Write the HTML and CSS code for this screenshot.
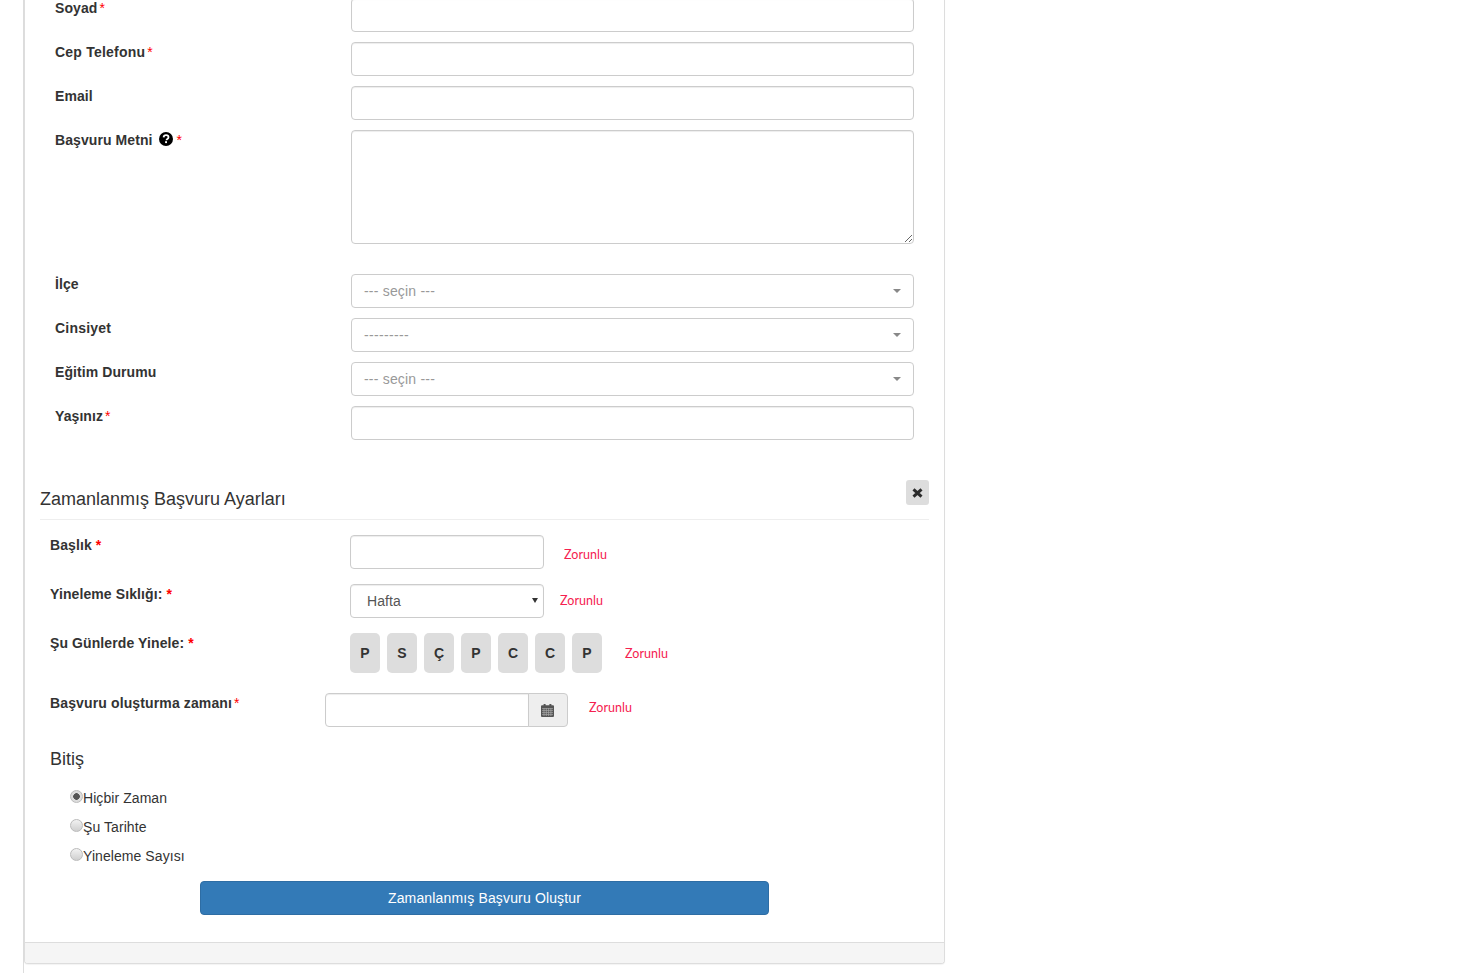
FILE: index.html
```html
<!DOCTYPE html>
<html lang="tr">
<head>
<meta charset="utf-8">
<title>Zamanlanmış Başvuru</title>
<link rel="stylesheet" href="styles.css">
</head>
<body>
<div class="page">
  <div class="panel">
    <div class="panel-body">
      <form class="main-form">
        <div class="row"><label class="lbl">Soyad<span class="req">*</span></label><input class="ctl" type="text"></div>
        <div class="row"><label class="lbl lbl-wide">Cep Telefonu<span class="req">*</span></label><input class="ctl" type="text"></div>
        <div class="row"><label class="lbl">Email</label><input class="ctl" type="text"></div>
        <div class="row row-area">
          <label class="lbl">Başvuru Metni
            <svg class="help" viewBox="0 0 14 14" width="14" height="14"><circle cx="7" cy="7" r="7" fill="#000"/><path d="M4.6 5.4C4.7 4 5.7 3.2 7.1 3.2c1.4 0 2.4.8 2.4 2 0 1-.6 1.4-1.2 1.8-.6.4-.8.6-.8 1.3" fill="none" stroke="#fff" stroke-width="1.8"/><rect x="6.1" y="9.2" width="1.9" height="1.9" fill="#fff"/></svg><span class="req req-help">*</span></label>
          <textarea class="ctl area"></textarea>
        </div>
        <div class="row"><label class="lbl">İlçe</label><div class="ctl pick"><span>--- seçin ---</span><i class="caret"></i></div></div>
        <div class="row"><label class="lbl lbl-wide">Cinsiyet</label><div class="ctl pick"><span class="dashes">---------</span><i class="caret"></i></div></div>
        <div class="row"><label class="lbl">Eğitim Durumu</label><div class="ctl pick"><span>--- seçin ---</span><i class="caret"></i></div></div>
        <div class="row"><label class="lbl">Yaşınız<span class="req">*</span></label><input class="ctl" type="text"></div>
      </form>

      <div class="sec-head">
        <h4 class="sec-title">Zamanlanmış Başvuru Ayarları</h4>
        <button class="close" type="button" aria-label="Kapat"><svg viewBox="0 0 11 10" width="11" height="10"><path d="M1.5 1.3l8 7.4M9.5 1.3l-8 7.4" stroke="#2b2b2b" stroke-width="3"/></svg></button>
      </div>

      <div class="sched">
        <div class="srow s1"><label class="slbl">Başlık <b>*</b></label><input class="ctl short" type="text"><span class="err e1">Zorunlu</span></div>
        <div class="srow s1"><label class="slbl">Yineleme Sıklığı: <b>*</b></label><select class="ctl short sel"><option>Hafta</option></select><span class="err e2">Zorunlu</span></div>
        <div class="srow s2"><label class="slbl">Şu Günlerde Yinele: <b>*</b></label>
          <div class="days"><span class="day">P</span><span class="day">S</span><span class="day">Ç</span><span class="day">P</span><span class="day">C</span><span class="day">C</span><span class="day">P</span></div>
          <span class="err e3">Zorunlu</span></div>
        <div class="srow s3"><label class="slbl time-lbl">Başvuru oluşturma zamanı<span class="req">*</span></label>
          <div class="group"><input class="ctl grp-in" type="text"><span class="addon"><svg class="cal" viewBox="0 0 13 14" width="13" height="14"><path d="M0 3.2a1 1 0 0 1 1-1h1.6V1h2v1.2h3.8V1h2v1.2H12a1 1 0 0 1 1 1V13a1 1 0 0 1-1 1H1a1 1 0 0 1-1-1z" fill="#555"/><path d="M1 5.6h11M1 7.6h11M1 9.6h11M1 11.6h11M3 5v8M5.3 5v8M7.6 5v8M9.9 5v8" stroke="#aaa" stroke-width=".7"/></svg></span></div>
          <span class="err e4">Zorunlu</span></div>

        <h4 class="bitis">Bitiş</h4>
        <div class="radios">
          <label class="rad"><input type="radio" name="end" checked>Hiçbir Zaman</label>
          <label class="rad"><input type="radio" name="end">Şu Tarihte</label>
          <label class="rad"><input type="radio" name="end">Yineleme Sayısı</label>
        </div>
        <button class="submit" type="button">Zamanlanmış Başvuru Oluştur</button>
      </div>
    </div>
    <div class="panel-foot"></div>
  </div>
</div>
</body>
</html>
```
FILE: styles.css
```css
* { box-sizing: border-box; }
html, body { margin: 0; padding: 0; height: 975px; overflow: hidden; background: #fff; }
body { font-family: "Liberation Sans", Arial, sans-serif; font-size: 14px; line-height: 20px; color: #333; }
.page { margin-left: 23px; height: 975px; border-left: 1px solid #ddd; }
.panel { width: 921px; margin-top: -2px; border: 1px solid #ddd; border-top: 0; border-radius: 0 0 4px 4px; box-shadow: 0 1px 1px rgba(0,0,0,.05); background: #fff; }
.panel-body { padding: 0 15px 27px; }
.panel-foot { height: 21px; background: #f5f5f5; border-top: 1px solid #ddd; border-radius: 0 0 3px 3px; }

.main-form { padding-left: 15px; }
.row { display: grid; grid-template-columns: 296px 563px; margin-bottom: 10px; }
.row-area { margin-bottom: 30px; }
.lbl { font-weight: 700; display: block; letter-spacing: .08px; }
.lbl-wide { letter-spacing: .22px; }
.req { color: #f00; font-weight: 400; font-size: 14px; margin-left: 2px; letter-spacing: 0; }
.req-help { margin-left: 3px; }
.help { vertical-align: -1px; margin-left: 3px; }
.ctl { display: block; height: 34px; border: 1px solid #ccc; border-radius: 4px; background: #fff; font: 14px "Liberation Sans", Arial, sans-serif; color: #555; box-shadow: inset 0 1px 1px rgba(0,0,0,.075); }
.area { height: 114px; resize: vertical; }
.pick { display: flex; align-items: center; justify-content: space-between; padding: 0 12px; color: #999; box-shadow: none; letter-spacing: .2px; }
.dashes { letter-spacing: .33px; }
.caret { width: 0; height: 0; border-top: 4px solid #888; border-left: 4px solid transparent; border-right: 4px solid transparent; }

.sec-head { display: flex; justify-content: space-between; margin-top: 40px; height: 40px; border-bottom: 1px solid #eee; }
.sec-title { margin: 9px 0 0; font-size: 18px; font-weight: 400; line-height: 20px; }
.close { width: 23px; height: 25px; padding: 0; border: 0; border-radius: 3px; background: #ddd; display: flex; align-items: center; justify-content: center; }

.sched { padding-top: 15px; }
.srow { display: flex; align-items: flex-start; padding-left: 10px; }
.s1 { margin-bottom: 15px; }
.s2 { margin-bottom: 20px; }
.slbl { width: 300px; font-weight: 700; flex: none; letter-spacing: .1px; }
.slbl b { color: #f00; }
.time-lbl { width: 275px; letter-spacing: .13px; }
.short { width: 194px; }
.sel { padding: 0 0 0 16px; appearance: none; -webkit-appearance: none; letter-spacing: .1px; background: #fff url("data:image/svg+xml,%3Csvg xmlns='http://www.w3.org/2000/svg' width='6' height='5'%3E%3Cpath d='M0 0h6L3 5z' fill='%23333'/%3E%3C/svg%3E") no-repeat 181px 13px; }
.err { color: #f5214f; font: 12.5px/20px Lato, sans-serif; letter-spacing: .05px; }
.e1 { margin: 10px 0 0 20px; }
.e2 { margin: 6.5px 0 0 16px; }
.e3 { margin: 10.5px 0 0 23px; }
.e4 { margin: 4.5px 0 0 21px; }
.days { display: flex; gap: 7px; }
.day { width: 30px; height: 40px; border-radius: 5px; background: #ddd; font-weight: 700; display: flex; align-items: center; justify-content: center; }
.group { display: flex; width: 243px; }
.grp-in { flex: 1; min-width: 0; border-radius: 4px 0 0 4px; }
.addon { width: 40px; height: 34px; margin-left: -1px; border: 1px solid #ccc; border-radius: 0 4px 4px 0; background: #eee; display: flex; align-items: center; justify-content: center; }
.cal { margin-left: -1px; }

.bitis { margin: 22px 0 0 10px; font-size: 18px; font-weight: 400; line-height: 20px; }
.radios { margin: 19px 0 0 30px; }
.rad { display: block; height: 29px; line-height: 20px; color: #333; letter-spacing: .07px; }
.rad input { appearance: none; -webkit-appearance: none; width: 13px; height: 13px; margin: 0; vertical-align: 0; border: 1px solid #bbb; border-radius: 50%; background: linear-gradient(#f2f2f2, #cfcfcf); }
.rad input:checked { background: radial-gradient(circle, #555 0 3px, #ddd 3.6px); }
.submit { display: block; width: 569px; height: 34px; margin: 6px 0 0 160px; padding: 0; border: 1px solid #2e6da4; border-radius: 4px; background: #337ab7; color: #fff; font: 14px "Liberation Sans", Arial, sans-serif; letter-spacing: .15px; }
```
